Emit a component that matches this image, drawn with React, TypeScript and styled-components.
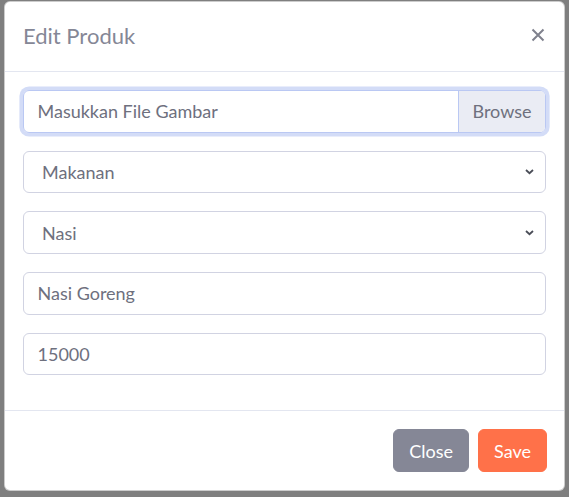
import React from "react";
import styled, { createGlobalStyle } from "styled-components";

const Global = createGlobalStyle`
  html, body { margin: 0; padding: 0; }
  body {
    background: #7f7f7f;
    font-family: Lato, "Noto Sans", sans-serif;
    font-size: 18px;
  }
  * { box-sizing: border-box; }
`;

const Backdrop = styled.div`
  width: 569px;
  height: 497px;
  padding: 1px 0 0 4px;
  background: #7f7f7f;
`;

const Modal = styled.div`
  width: 561px;
  background: #fff;
  border: 1px solid rgba(0, 0, 0, 0.2);
  border-radius: 6px;
  display: flex;
  flex-direction: column;
`;

const Header = styled.div`
  display: flex;
  align-items: center;
  justify-content: space-between;
  height: 70px;
  padding: 0 18px;
  border-bottom: 1px solid #e3e6f0;
`;

const Title = styled.h5`
  margin: 0 0 2px;
  font-size: 22px;
  font-weight: 400;
  color: #858796;
  line-height: 1.5;
`;

const CloseX = styled.button`
  border: 0;
  background: transparent;
  padding: 0;
  margin: 0 1px 4px 0;
  display: flex;
  cursor: pointer;
`;

const Body = styled.div`
  padding: 18px 18px 35px;
  display: flex;
  flex-direction: column;
  gap: 18.2px;
`;

const FileBox = styled.div`
  display: flex;
  height: 42.5px;
  border: 1px solid #bac8f3;
  border-radius: 6px;
  box-shadow: 0 0 0 3.6px rgba(78, 115, 223, 0.25);
  overflow: hidden;
`;

const FileLabel = styled.div`
  flex: 1;
  display: flex;
  align-items: center;
  padding: 0 13.5px;
  color: #6e707e;
`;

const BrowseBtn = styled.div`
  display: flex;
  align-items: center;
  padding: 0 13.5px;
  background: #eaecf4;
  border-left: 1px solid #bac8f3;
  color: #6e707e;
`;

const SelectBox = styled.div`
  display: flex;
  align-items: center;
  justify-content: space-between;
  height: 42.5px;
  padding: 0 11px 0 18px;
  border: 1px solid #d1d3e2;
  border-radius: 6px;
  color: #6e707e;
`;

const Field = styled.input`
  display: block;
  width: 100%;
  height: 42.5px;
  padding: 0 13.5px;
  border: 1px solid #d1d3e2;
  border-radius: 6px;
  font: inherit;
  color: #6e707e;
  outline: none;
  background: #fff;
`;

const Footer = styled.div`
  display: flex;
  justify-content: flex-end;
  gap: 9px;
  padding: 18px 17px 18px;
  border-top: 1px solid #e3e6f0;
`;

const Btn = styled.button<{ $bg: string }>`
  height: 42.5px;
  padding: 0 15px;
  border: 1px solid ${(p) => p.$bg};
  background: ${(p) => p.$bg};
  color: #fff;
  border-radius: 6px;
  font: inherit;
  cursor: pointer;
`;

const Chevron = () => (
  <svg width="9" height="7" viewBox="0 0 9 7">
    <path d="M1 2 L4.5 5.2 L8 2" fill="none" stroke="#4a4d57" strokeWidth="1.8" />
  </svg>
);

export default function App() {
  return (
    <>
      <Global />
      <Backdrop>
        <Modal>
          <Header>
            <Title>Edit Produk</Title>
            <CloseX aria-label="Close">
              <svg width="14" height="14" viewBox="0 0 14 14">
                <path d="M1.5 1.5 L12.5 12.5 M12.5 1.5 L1.5 12.5" stroke="#7f818d" strokeWidth="2" />
              </svg>
            </CloseX>
          </Header>
          <Body>
            <FileBox>
              <FileLabel>Masukkan File Gambar</FileLabel>
              <BrowseBtn>Browse</BrowseBtn>
            </FileBox>
            <SelectBox>
              <span>Makanan</span>
              <Chevron />
            </SelectBox>
            <SelectBox>
              <span>Nasi</span>
              <Chevron />
            </SelectBox>
            <Field defaultValue="Nasi Goreng" />
            <Field defaultValue="15000" />
          </Body>
          <Footer>
            <Btn $bg="#858796">Close</Btn>
            <Btn $bg="#ff7149">Save</Btn>
          </Footer>
        </Modal>
      </Backdrop>
    </>
  );
}
